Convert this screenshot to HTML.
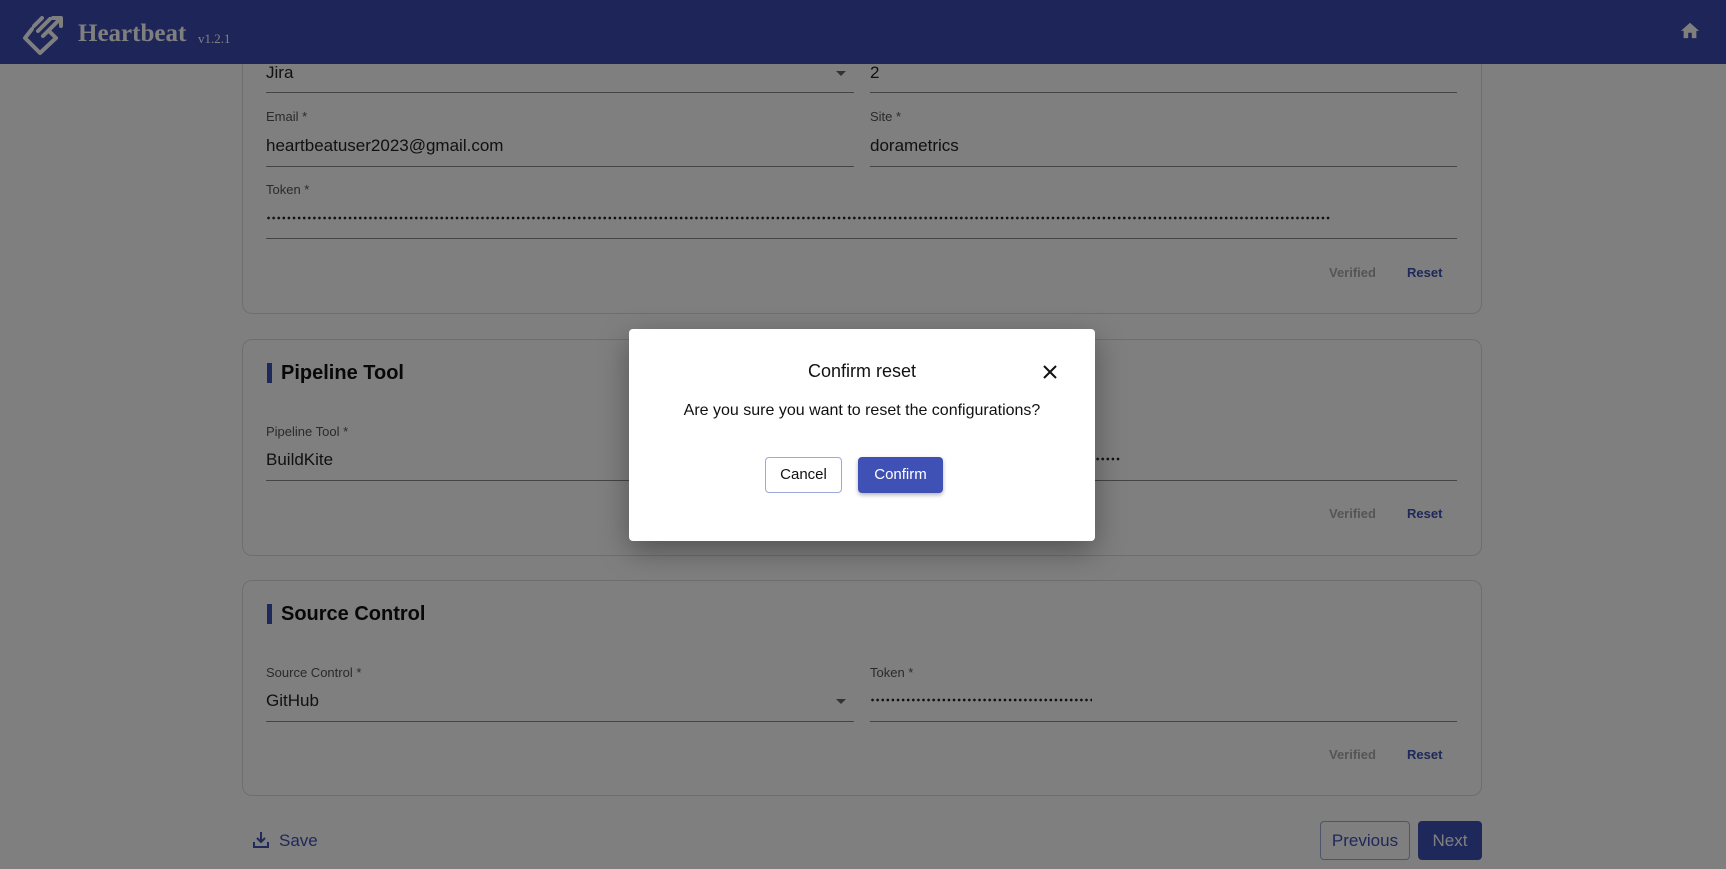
<!DOCTYPE html>
<html><head><meta charset="utf-8"><style>
*{margin:0;padding:0;box-sizing:border-box}
body{width:1726px;height:869px;overflow:hidden;background:#fff;font-family:"Liberation Sans",Arial,sans-serif;position:relative;color:#222}
.a{position:absolute;white-space:nowrap}
.hdr{position:absolute;left:0;top:0;width:1726px;height:64px;background:#3d4db3;z-index:5}
.card{position:absolute;left:242px;width:1240px;border:1px solid #ddd;border-radius:10px;background:#fff}
.lab{font-size:13px;color:#555}
.val{font-size:17px;color:#222}
.ul{position:absolute;height:1px;background:#888}
.ver{font-size:13px;font-weight:bold;color:#aaa}
.rst{font-size:13px;font-weight:bold;color:#3f51b5}
.ttl{font-size:20px;font-weight:bold;color:#111}
.bar{position:absolute;width:5px;height:20px;background:#3f51b5}
.dots{position:absolute;height:4px;background-image:radial-gradient(circle,#222 1.2px,transparent 1.5px);background-size:5.1px 4px}
.tri{position:absolute;width:0;height:0;border-left:5px solid transparent;border-right:5px solid transparent;border-top:5px solid #666}
.ov{position:absolute;left:0;top:0;width:1726px;height:869px;background:rgba(0,0,0,0.5);z-index:10}
.dlg{position:absolute;left:629px;top:329px;width:466px;height:212px;background:#fff;border-radius:4px;box-shadow:0 10px 30px rgba(0,0,0,.35);z-index:11}
</style></head><body>

<div class="card" style="top:40px;height:274px;border-top:none;border-radius:0 0 10px 10px"></div>
<div class="a val" style="left:266px;top:63px">Jira</div>
<div class="tri" style="left:836px;top:71px"></div>
<div class="ul" style="left:266px;top:92px;width:588px"></div>
<div class="a val" style="left:870px;top:63px">2</div>
<div class="ul" style="left:870px;top:92px;width:587px"></div>
<div class="a lab" style="left:266px;top:109px">Email *</div>
<div class="a val" style="left:266px;top:136px">heartbeatuser2023@gmail.com</div>
<div class="ul" style="left:266px;top:166px;width:588px"></div>
<div class="a lab" style="left:870px;top:109px">Site *</div>
<div class="a val" style="left:870px;top:136px">dorametrics</div>
<div class="ul" style="left:870px;top:166px;width:587px"></div>
<div class="a lab" style="left:266px;top:182px">Token *</div>
<div class="dots" style="left:266px;top:216px;width:1065px"></div>
<div class="ul" style="left:266px;top:238px;width:1191px"></div>
<div class="a ver" style="left:1329px;top:265px">Verified</div>
<div class="a rst" style="left:1407px;top:265px">Reset</div>

<div class="card" style="top:339px;height:217px"></div>
<div class="bar" style="left:267px;top:363px"></div>
<div class="a ttl" style="left:281px;top:362px">Pipeline Tool</div>
<div class="a lab" style="left:266px;top:424px">Pipeline Tool *</div>
<div class="a val" style="left:266px;top:450px">BuildKite</div>
<div class="ul" style="left:266px;top:480px;width:588px"></div>
<div class="dots" style="left:1090px;top:457px;width:30px"></div>
<div class="ul" style="left:870px;top:480px;width:587px"></div>
<div class="a ver" style="left:1329px;top:506px">Verified</div>
<div class="a rst" style="left:1407px;top:506px">Reset</div>

<div class="card" style="top:580px;height:216px"></div>
<div class="bar" style="left:267px;top:604px"></div>
<div class="a ttl" style="left:281px;top:603px">Source Control</div>
<div class="a lab" style="left:266px;top:665px">Source Control *</div>
<div class="a val" style="left:266px;top:691px">GitHub</div>
<div class="tri" style="left:836px;top:699px"></div>
<div class="ul" style="left:266px;top:721px;width:588px"></div>
<div class="a lab" style="left:870px;top:665px">Token *</div>
<div class="dots" style="left:870px;top:698px;width:222px"></div>
<div class="ul" style="left:870px;top:721px;width:587px"></div>
<div class="a ver" style="left:1329px;top:747px">Verified</div>
<div class="a rst" style="left:1407px;top:747px">Reset</div>

<svg class="a" style="left:252px;top:831px" width="18" height="18" viewBox="0 0 18 18" fill="none" stroke="#3f51b5" stroke-width="2"><path d="M9 1v10M5 7l4 4 4-4M2 11v5h14v-5"/></svg>
<div class="a" style="left:279px;top:831px;font-size:17px;color:#3f51b5">Save</div>
<div class="a" style="left:1320px;top:821px;width:90px;height:39px;border:1px solid #9fa8da;border-radius:4px;color:#3f51b5;font-size:17px;text-align:center;line-height:37px">Previous</div>
<div class="a" style="left:1418px;top:821px;width:64px;height:39px;background:#3f51b5;border-radius:4px;color:#fff;font-size:17px;text-align:center;line-height:39px">Next</div>

<div class="hdr">
<svg class="a" style="left:22px;top:12px" width="48" height="44" viewBox="0 0 48 44" fill="none" stroke="#fff" stroke-width="4" stroke-linecap="round" stroke-linejoin="round">
<path d="M10 17 L3 26 L18 41 L34 26 L28 20"/><path d="M12 14 L20 6"/><path d="M16 19 L28 7"/><path d="M21 24 L38 7"/><path d="M31 6 L39 6 L39 14"/></svg>
<div class="a" style="left:78px;top:20px;font-family:'Liberation Serif',serif;font-weight:bold;font-size:25px;color:#fff">Heartbeat</div>
<div class="a" style="left:198px;top:31px;font-family:'Liberation Serif',serif;font-size:13px;color:#fff">v1.2.1</div>
<svg class="a" style="left:1679px;top:20px" width="22" height="20" viewBox="0 0 24 22"><path d="M10 20v-6h4v6h5v-8h3L12 3 2 12h3v8z" fill="#fff"/></svg>
</div>

<div class="ov"></div>
<div class="dlg">
<div class="a" style="left:0;width:466px;top:32px;text-align:center;font-size:18px;color:#111">Confirm reset</div>
<svg class="a" style="left:413px;top:35px" width="16" height="16" viewBox="0 0 16 16" stroke="#111" stroke-width="2"><path d="M2 2L14 14M14 2L2 14"/></svg>
<div class="a" style="left:0;width:466px;top:73px;text-align:center;font-size:16px;color:#111">Are you sure you want to reset the configurations?</div>
<div class="a" style="left:136px;top:128px;width:77px;height:36px;border:1px solid #9fa8da;border-radius:4px;text-align:center;line-height:34px;font-size:15px;color:#111">Cancel</div>
<div class="a" style="left:229px;top:128px;width:85px;height:36px;background:#3f51b5;border-radius:4px;text-align:center;line-height:36px;font-size:15px;color:#fff;box-shadow:0 2px 4px rgba(0,0,0,.3)">Confirm</div>
</div>
</body></html>
